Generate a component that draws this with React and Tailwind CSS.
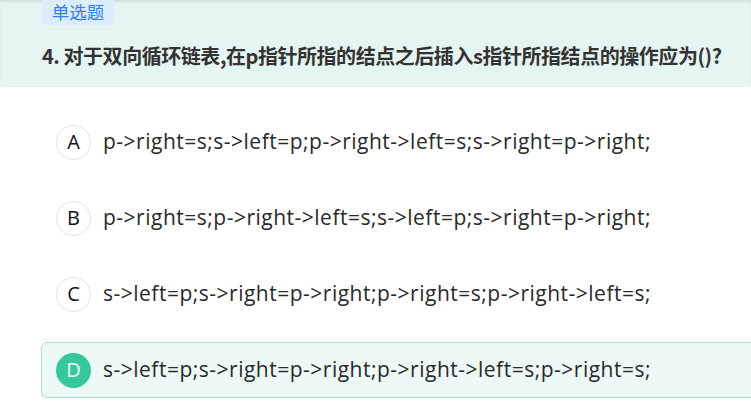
import React from "react";

const options = [
  { k: "A", t: "p->right=s;s->left=p;p->right->left=s;s->right=p->right;" },
  { k: "B", t: "p->right=s;p->right->left=s;s->left=p;s->right=p->right;" },
  { k: "C", t: "s->left=p;s->right=p->right;p->right=s;p->right->left=s;" },
  { k: "D", t: "s->left=p;s->right=p->right;p->right->left=s;p->right=s;", sel: true },
];

export default function App() {
  return (
    <div
      className="w-[751px] h-[411px] overflow-hidden bg-white text-[#333] font-['Noto_Sans_CJK_SC',sans-serif]"
    >
      <div className="h-[87px] bg-[#e5f5f1] pl-[42px] shadow-[inset_0_2px_2px_rgba(0,0,0,0.08)]">
        <div className="inline-flex h-[25px] w-[72px] items-center justify-center rounded-b-[4px] bg-[#dcecfb] text-[17.5px] text-[#2f7ff6]">
          单选题
        </div>
        <div className="mt-[17px] text-[20px] tracking-[-0.45px] font-bold leading-[28px] text-[#333] whitespace-nowrap">
          4. 对于双向循环链表,在p指针所指的结点之后插入s指针所指结点的操作应为()?
        </div>
      </div>
      <div className="mt-[27px] flex flex-col gap-[20px] pl-[41px]">
        {options.map((o) => (
          <div
            key={o.k}
            className={
              "flex h-[56px] w-[730px] items-center rounded-[6px] border pl-[14px] " +
              (o.sel ? "border-[#a6e2cd] bg-[#edf9f6]" : "border-transparent")
            }
          >
            <div
              className={
                "flex h-[35px] w-[35px] shrink-0 items-center justify-center rounded-full font-['Open_Sans',sans-serif] text-[20px] " +
                (o.sel
                  ? "bg-[#33c99b] text-white"
                  : "border border-[#e2e2e2] bg-white text-[#111]")
              }
            >
              {o.k}
            </div>
            <div className="ml-[12px] whitespace-nowrap font-['Open_Sans',sans-serif] text-[21px] tracking-[0.5px] text-[#2a2a2a]">{o.t}</div>
          </div>
        ))}
      </div>
    </div>
  );
}
